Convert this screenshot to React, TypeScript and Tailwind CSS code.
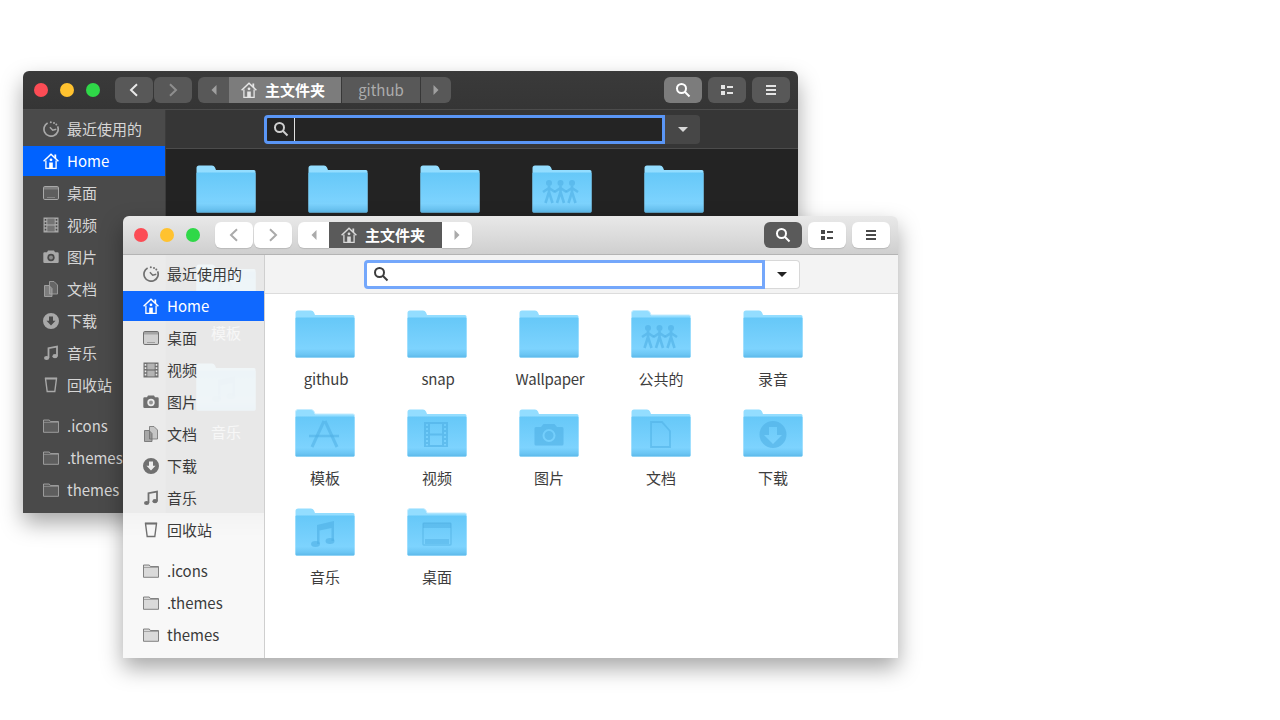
import React from "react";

type Theme = "dark" | "light";

const Sv = ({ s = 16, children, className = "" }: { s?: number; children: React.ReactNode; className?: string }) => (
  <svg width={s} height={s} viewBox="0 0 16 16" fill="none" className={"shrink-0 " + className}>
    {children}
  </svg>
);

const HomeI = ({ s = 16, className = "" }: { s?: number; className?: string }) => (
  <Sv s={s} className={className}>
    <path d="M.6 8.200 8 1.200l7.400 7" stroke="currentColor" strokeWidth="1.500" />
    <path d="M12.300 1.500v3.500" stroke="currentColor" strokeWidth="1.800" />
    <path d="M2.900 7.600v7.700h10.200V7.600" stroke="currentColor" strokeWidth="1.300" />
    <circle cx="8" cy="6.800" r="1.400" fill="currentColor" />
    <path d="M6.200 15.300V9.600h3.600v5.700z" fill="currentColor" />
  </Sv>
);
const Recent = () => (
  <Sv>
    <path d="M4.600 1.900A7.100 7.100 0 1 0 14.600 5.300" stroke="currentColor" strokeWidth="1.700" />
    <path d="M6.900 6.200 9.700 9.200l3.600-1" stroke="currentColor" strokeWidth="1.500" />
    <circle cx="7.800" cy="1.200" r="1" fill="currentColor" />
    <circle cx="11" cy="1.900" r="1" fill="currentColor" />
    <circle cx="13.300" cy="3.500" r="1" fill="currentColor" />
  </Sv>
);
const Desktop = () => (
  <Sv>
    <rect x=".5" y="1.500" width="15" height="13" rx="1.300" stroke="currentColor" fillOpacity=".22" fill="currentColor" />
    <path d="M1 2h14v2.500H1z" fill="currentColor" opacity=".45" />
    <path d="M4.500 12.500h7" stroke="currentColor" strokeDasharray="1 1" />
  </Sv>
);
const Video = () => (
  <Sv>
    <path fillRule="evenodd" clipRule="evenodd" d="M.5 .5h15v15H.5zM1.700 2v1.800h1.600V2zm0 3.200V7h1.600V5.200zm0 3.300v1.800h1.600V8.500zm0 3.300v1.800h1.600v-1.800zM12.700 2v1.800h1.600V2zm0 3.200V7h1.600V5.200zm0 3.300v1.800h1.600V8.500zm0 3.300v1.800h1.600v-1.800zM4.500 1.700v5.600h7V1.700zm0 7v5.600h7V8.700z" fill="currentColor" />
    <path d="M4.500 1.700h7v5.600h-7zM4.500 8.700h7v5.600h-7z" fill="currentColor" opacity=".45" />
  </Sv>
);
const Camera = () => (
  <Sv>
    <path fillRule="evenodd" clipRule="evenodd" d="M1.500 3.300H4L5 1.500h6l1 1.800h2.500a1.200 1.200 0 0 1 1.200 1.200v8.300a1.200 1.200 0 0 1-1.200 1.200h-13a1.200 1.200 0 0 1-1.200-1.200V4.500A1.200 1.200 0 0 1 1.500 3.300zM8 4.800a3.700 3.700 0 1 0 0 7.400 3.700 3.700 0 0 0 0-7.400z" fill="currentColor" />
    <circle cx="8" cy="8.500" r="2" fill="currentColor" opacity=".7" />
  </Sv>
);
const Docs = () => (
  <Sv>
    <path d="M6.500 .5h4.500l3.500 3.500v9H6.500z" fill="currentColor" fillOpacity=".3" stroke="currentColor" strokeOpacity=".8" />
    <path d="M1.500 4.500H6l3 3v8H1.500z" fill="currentColor" fillOpacity=".55" stroke="currentColor" strokeOpacity=".85" />
  </Sv>
);
const Down = () => (
  <Sv>
    <path fillRule="evenodd" clipRule="evenodd" d="M8 0a8 8 0 1 0 0 16A8 8 0 0 0 8 0zM6 3.500h4v4.200h2.500L8 12.500 3.500 7.700H6z" fill="currentColor" />
  </Sv>
);
const Music = () => (
  <Sv>
    <path d="M5.500 13V3.200L14 1.500V11" stroke="currentColor" strokeWidth="1.800" />
    <ellipse cx="3.600" cy="13" rx="2.600" ry="2.100" fill="currentColor" />
    <ellipse cx="12" cy="11.200" rx="2.600" ry="2.100" fill="currentColor" />
  </Sv>
);
const Trash = () => (
  <Sv>
    <path d="M2.500 1.500h11l-1.700 13H4.200z" stroke="currentColor" strokeWidth="1.400" />
    <path d="M2 1.500h12" stroke="currentColor" strokeWidth="1.800" />
  </Sv>
);
const SmallFolder = () => (
  <Sv>
    <path d="M.5 2h5.800l1 1.500h8.200v10.800H.5z" fill="currentColor" fillOpacity=".22" stroke="currentColor" strokeOpacity=".85" />
    <path d="M1 4.500h14" stroke="currentColor" strokeOpacity=".5" />
  </Sv>
);
const Search = ({ className = "" }: { className?: string }) => (
  <Sv s={16} className={className}>
    <circle cx="6.500" cy="6.500" r="4.500" stroke="currentColor" strokeWidth="2" />
    <path d="m10 10 4.500 4.500" stroke="currentColor" strokeWidth="2" />
  </Sv>
);
const Chev = ({ dir, className = "" }: { dir: "l" | "r"; className?: string }) => (
  <Sv className={className}>
    <path d={dir === "l" ? "M11 2.200 5 8l6 5.800" : "M5 2.200 11 8l-6 5.800"} stroke="currentColor" strokeWidth="2" />
  </Sv>
);
const Tri = ({ dir, className = "" }: { dir: "l" | "r"; className?: string }) => (
  <Sv className={className}>
    <path d={dir === "l" ? "M10.500 3v10L5.500 8z" : "M5.500 3v10l5-5z"} fill="currentColor" />
  </Sv>
);

const G = "#4fafe4";
const glyphs: Record<string, React.ReactNode> = {
  people: (
    <g fill="none" stroke={G} strokeOpacity=".6" strokeWidth="2.600">
      {[17, 28.500, 40].map((x) => (
        <g key={x}>
          <circle cx={x} cy="18" r="3" fill={G} fillOpacity=".6" stroke="none" />
          <path d={`M${x} 21v6M${x - 6} 27l6-4 6 4M${x} 27l-3.500 11M${x} 27l3.500 11`} />
        </g>
      ))}
    </g>
  ),
  template: (
    <g stroke={G} strokeOpacity=".55" fill="none">
      <path d="M17 38 29 12M30 12l12 26" strokeWidth="3" />
      <path d="M14 27h30" strokeWidth="2.500" />
    </g>
  ),
  video: (
    <path fillRule="evenodd" clipRule="evenodd" d="M17 13h24v25H17zM19 15v2h2v-2zm0 4v2h2v-2zm0 4v2h2v-2zm0 4v2h2v-2zm0 4v2h2v-2zm0 4v1.500h2V35zM37 15v2h2v-2zm0 4v2h2v-2zm0 4v2h2v-2zm0 4v2h2v-2zm0 4v2h2v-2zm0 4v1.500h2V35zM23 15v9.500h12V15zm0 11.500V36h12v-9.500z" fill={G} fillOpacity=".6" />
  ),
  camera: (
    <path fillRule="evenodd" clipRule="evenodd" d="M17 18h5l2.500-3h11l2.500 3h5a1.500 1.500 0 0 1 1.500 1.500V35a1.500 1.500 0 0 1-1.500 1.500H17a1.500 1.500 0 0 1-1.500-1.500V19.500A1.500 1.500 0 0 1 17 18zm13 2a6.500 6.500 0 1 0 0 13 6.500 6.500 0 0 0 0-13zm0 2a4.500 4.500 0 1 1 0 9 4.500 4.500 0 0 1 0-9z" fill={G} fillOpacity=".6" />
  ),
  doc: <path d="M20 13h11l8 9v16H20z" fill={G} fillOpacity=".05" stroke={G} strokeOpacity=".55" strokeWidth="1.800" />,
  download: (
    <path fillRule="evenodd" clipRule="evenodd" d="M30 12a13.500 13.500 0 1 0 0 27 13.500 13.500 0 0 0 0-27zm-4 6h8v8h5L30 35l-9-9h5z" fill={G} fillOpacity=".6" />
  ),
  music: (
    <g fill={G} fillOpacity=".6">
      <path d="M22 17 39 13v20h-2.500V20l-12 2.500V36H22z" />
      <ellipse cx="20.500" cy="36" rx="4.500" ry="3" />
      <ellipse cx="35" cy="33" rx="4.500" ry="3" />
    </g>
  ),
  desktop: (
    <g>
      <rect x="16" y="15" width="28" height="22" rx="1" fill="none" stroke={G} strokeOpacity=".5" strokeWidth="1.500" />
      <rect x="16" y="15" width="28" height="5" fill={G} fillOpacity=".5" />
      <rect x="18" y="31" width="24" height="5" fill={G} fillOpacity=".5" />
    </g>
  ),
};

const Folder = ({ glyph, glow, id }: { glyph?: string; glow?: boolean; id: string }) => (
  <svg width="60" height="48" viewBox="0 0 60 48" className="block">
    <defs>
      <linearGradient id={id} x1="0" y1="0" x2="0" y2="1">
        <stop offset="0" stopColor="#66c8f8" />
        <stop offset=".78" stopColor="#7dd3fe" />
        <stop offset=".92" stopColor="#6cc6f4" />
        <stop offset="1" stopColor="#5cb9ea" />
      </linearGradient>
    </defs>
    <path
      d="M.5 3Q.5 .5 3 .5H16Q18 .5 19 2.500L20 5H58Q59.500 5 59.500 6.500V46Q59.500 47.500 58 47.500H2Q.5 47.500 .5 46Z"
      fill="#93ddff"
      stroke={glow ? "#c4ecff" : "none"}
      strokeWidth={glow ? 1 : 0}
    />
    <rect x=".5" y="7.500" width="59" height="40" rx="1" fill={`url(#${id})`} />
    {glyph ? glyphs[glyph] : null}
  </svg>
);

const sidebar: [string, React.ReactNode][] = [
  ["最近使用的", <Recent />],
  ["Home", <HomeI />],
  ["桌面", <Desktop />],
  ["视频", <Video />],
  ["图片", <Camera />],
  ["文档", <Docs />],
  ["下载", <Down />],
  ["音乐", <Music />],
  ["回收站", <Trash />],
];
const places: [string, React.ReactNode][] = [
  [".icons", <SmallFolder />],
  [".themes", <SmallFolder />],
  ["themes", <SmallFolder />],
];

const items: { n: string; g?: string; glow?: boolean; latin?: boolean }[] = [
  { n: "github", latin: true },
  { n: "snap", latin: true },
  { n: "Wallpaper", latin: true },
  { n: "公共的", g: "people", glow: true },
  { n: "录音" },
  { n: "模板", g: "template", glow: true },
  { n: "视频", g: "video" },
  { n: "图片", g: "camera" },
  { n: "文档", g: "doc" },
  { n: "下载", g: "download" },
  { n: "音乐", g: "music" },
  { n: "桌面", g: "desktop", glow: true },
];

const Lights = () => (
  <div className="flex gap-3 ml-[11px] mr-[15px]">
    <div className="w-3.5 h-3.5 rounded-full bg-[#fc4c55]" />
    <div className="w-3.5 h-3.5 rounded-full bg-[#ffc22f]" />
    <div className="w-3.5 h-3.5 rounded-full bg-[#2fd848]" />
  </div>
);

const Row = ({ label, icon, active, dark }: { label: string; icon: React.ReactNode; active?: boolean; dark: boolean }) => (
  <div
    className={
      "h-[30px] flex items-center pl-5 gap-2 text-[15px] whitespace-nowrap " +
      (active ? (dark ? "bg-[#0062ff] text-white" : "bg-[#0f68ff] text-white") : dark ? "text-[#d6d6d6]" : "text-[#3b3b3b]")
    }
  >
    <span className={active ? "text-white" : dark ? "text-[#a8a8a8]" : "text-[#707070]"}>{icon}</span>
    {label}
  </div>
);

const Win = ({ theme, className }: { theme: Theme; className: string }) => {
  const dark = theme === "dark";
  const btn = "h-[26px] flex items-center justify-center " + (dark ? "bg-[#585858]" : "bg-white shadow-[0_1px_1px_rgba(0,0,0,0.12)]");
  const activeBg = dark ? "bg-[#7c7c7c]" : "bg-[#5a5a5a]";
  const iconC = dark ? "text-[#e4e4e4]" : "text-[#4a4a4a]";
  const dim = dark ? "text-[#a0a0a0]" : "text-[#aaaaaa]";
  const Toggles = (
    <div className="ml-auto flex gap-1.5 mr-2">
      <div className={"h-[26px] w-[38px] rounded-md flex items-center justify-center " + activeBg}>
        <Search className="text-white" />
      </div>
      <div className={btn + " w-[38px] rounded-md"}>
        <Sv className={iconC}>
          <path d="M2 3h4v4H2zM2 9h4v4H2zM8 4h6v2H8zM8 10h6v2H8z" fill="currentColor" />
        </Sv>
      </div>
      <div className={btn + " w-[38px] rounded-md"}>
        <Sv className={iconC}>
          <path d="M3 3h10v2H3zM3 7h10v2H3zM3 11h10v2H3z" fill="currentColor" />
        </Sv>
      </div>
    </div>
  );
  return (
    <div
      className={
        "absolute w-[775px] h-[442px] rounded-t-md overflow-hidden flex flex-col font-['Noto_Sans_CJK_SC','Noto_Sans',sans-serif] " +
        className
      }
    >
      <div
        className={
          "h-[39px] shrink-0 flex items-center border-b " +
          (dark ? "bg-[linear-gradient(#3a3a3a,#353535)] border-[#4c4c4c]" : "bg-[linear-gradient(#e9e9e9,#cfcfcf)] border-[#b4b4b4]")
        }
      >
        <Lights />
        <div className="flex gap-px">
          <div className={btn + " w-[38px] rounded-md"}>
            <Chev dir="l" className={dark ? "text-[#e8e8e8]" : "text-[#aaaaaa]"} />
          </div>
          <div className={btn + " w-[38px] rounded-md"}>
            <Chev dir="r" className={dark ? "text-[#8e8e8e]" : "text-[#aaaaaa]"} />
          </div>
        </div>
        <div className="flex ml-1.5">
          <div className={btn + " w-[31px] rounded-l-md"}>
            <Tri dir="l" className={dim} />
          </div>
          <div className={"h-[26px] flex items-center pl-3 gap-2 text-[15px] font-bold text-white " + activeBg + (dark ? " w-[112px] mr-px" : " w-[113px]")}>
            <HomeI s={16} className={dark ? "text-[#e6e6e6]" : "text-[#d8d8d8]"} />
            主文件夹
          </div>
          {dark && (
            <div className="h-[26px] w-[78px] mr-px bg-[#585858] flex items-center justify-center text-[15px] text-[#acacac]">github</div>
          )}
          <div className={btn + " w-[30px] rounded-r-md"}>
            <Tri dir="r" className={dim} />
          </div>
        </div>
        {Toggles}
      </div>
      <div className="flex-1 flex min-h-0">
        <div
          className={
            "shrink-0 pt-1 flex flex-col gap-0.5 border-r " +
            (dark ? "w-[143px] bg-[#4a4a4a] border-[#3c3c3c]" : "w-[142px] bg-[rgba(248,248,248,0.93)] border-[#cfcfcf]")
          }
        >
          {sidebar.map(([l, i]) => (
            <Row key={l} label={l} icon={i} active={l === "Home"} dark={dark} />
          ))}
          <div className="h-[7px]" />
          {places.map(([l, i]) => (
            <Row key={l} label={l} icon={i} dark={dark} />
          ))}
        </div>
        <div className={"flex-1 flex flex-col min-w-0 " + (dark ? "bg-[#232323]" : "bg-white")}>
          <div
            className={
              "h-[39px] shrink-0 flex items-center justify-center border-b " +
              (dark ? "bg-[#363636] border-[#4c4c4c]" : "bg-[#f3f3f3] border-[#dcdcdc] pl-px")
            }
          >
            <div
              className={
                "w-[401px] h-[29px] rounded-l-[4px] border-[3px] flex items-center pl-[6px] " +
                (dark ? "border-[#5a96f6] bg-[#242424]" : "border-[#74a7fb] bg-white")
              }
            >
              <Search className={dark ? "text-[#cfcfcf]" : "text-[#3c3c3c]"} />
              {dark && <div className="w-px h-[23px] ml-[5px] bg-[#e0e0e0]" />}
            </div>
            <div
              className={
                "w-[35px] h-[29px] rounded-r-[4px] flex items-center justify-center " +
                (dark ? "bg-[#474747] text-[#d8d8d8]" : "bg-white border border-[#d8d8d8] border-l-0 text-[#222222]")
              }
            >
              <svg width="10" height="5" viewBox="0 0 10 5">
                <path d="M0 0h10L5 5z" fill="currentColor" />
              </svg>
            </div>
          </div>
          <div className="grid grid-cols-[repeat(5,112px)] auto-rows-[99px] pt-[16px] pl-[4px]">
            {items.map((it) => (
              <div key={it.n} className="flex flex-col items-center">
                <Folder glyph={it.g} glow={it.glow && !dark} id={theme + it.n} />
                <div
                  className={
                    "mt-[8px] text-[15px] leading-[26px] " +
                    (it.latin ? "tracking-[-0.2px] translate-x-px " : "") +
                    (dark ? "text-[#e8e8e8]" : "text-[#3d3d3d]")
                  }
                >
                  {it.n}
                </div>
              </div>
            ))}
          </div>
        </div>
      </div>
    </div>
  );
};

export default function App() {
  return (
    <div className="relative w-[1280px] h-[720px] bg-white overflow-hidden">
      <Win theme="dark" className="left-[23px] top-[71px] shadow-[0_10px_22px_rgba(0,0,0,0.35)]" />
      <Win theme="light" className="left-[123px] top-[216px] shadow-[0_10px_22px_rgba(0,0,0,0.35)]" />
    </div>
  );
}
